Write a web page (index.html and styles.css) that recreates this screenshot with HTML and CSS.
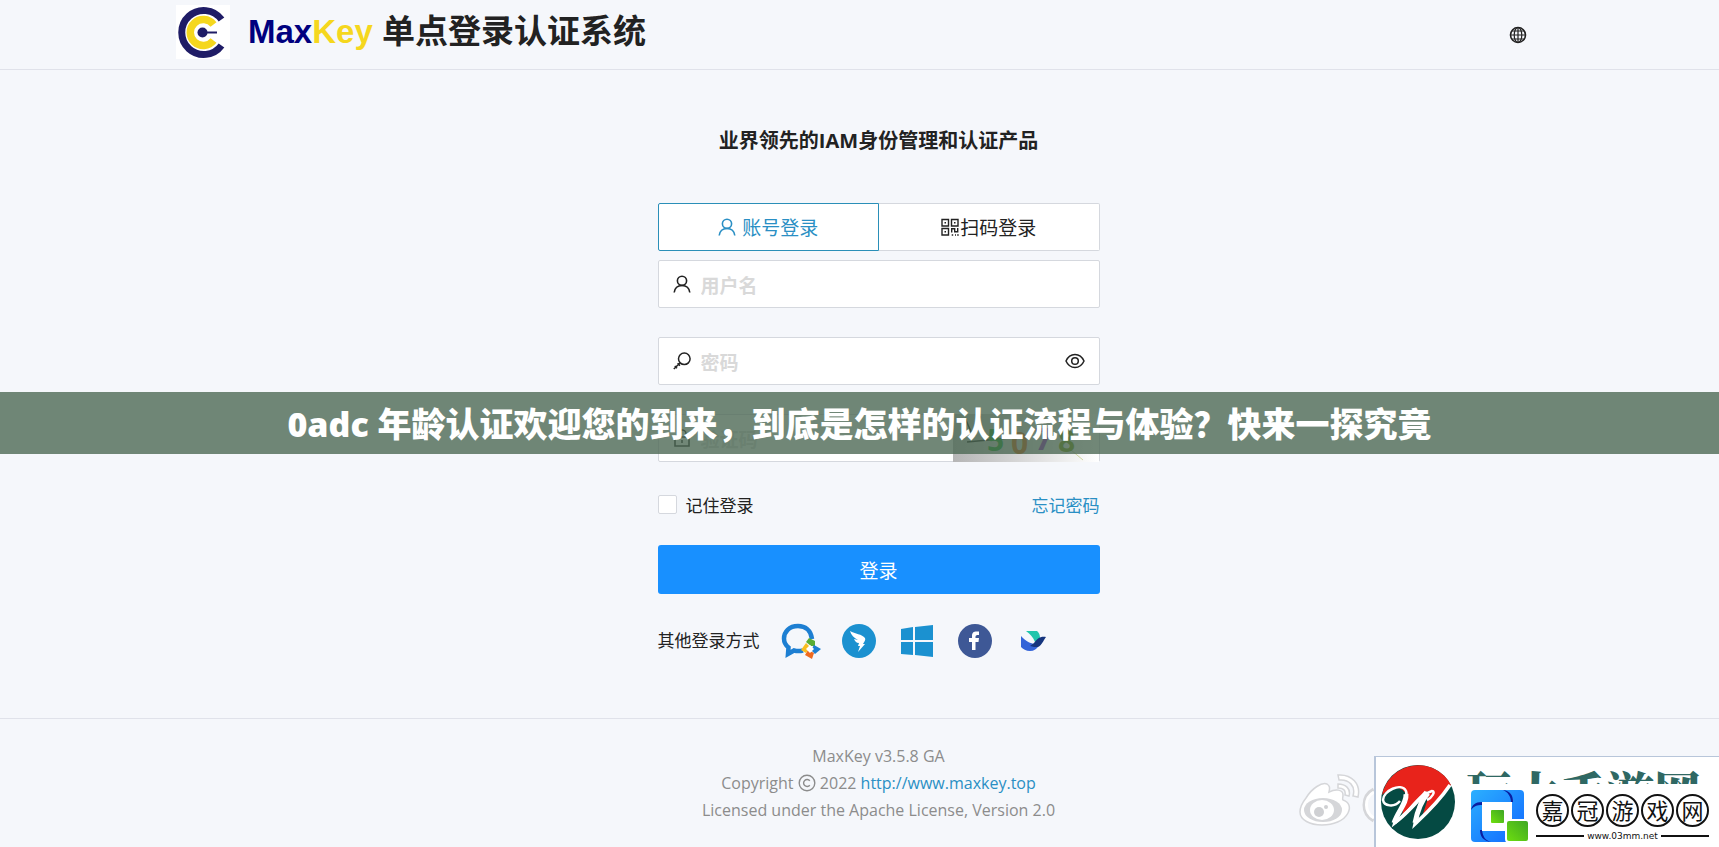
FILE: index.html
```html
<!DOCTYPE html>
<html lang="zh-CN">
<head>
    <meta charset="UTF-8">
    <meta name="viewport" content="width=device-width, initial-scale=1.0">
    <title>MaxKey 单点登录认证系统</title>
    <link rel="stylesheet" href="styles.css">
</head>
<body>
    <header class="header">
        <div class="brand">
            <svg class="logo" viewBox="0 0 54 54">
                <rect width="54" height="54" fill="#fff"/>
                <path d="M45.500 14.500A22 22 0 1 0 45.500 40.500" fill="none" stroke="#1f1c66" stroke-width="7"/>
                <path d="M37.500 19.500A13 13 0 1 0 37.500 35.500" fill="none" stroke="#f5d71e" stroke-width="7.500"/>
                <circle cx="26.500" cy="27.500" r="5" fill="#1f1c66"/>
                <path d="M26 27.500H41" stroke="#1f1c66" stroke-width="2"/>
            </svg>
            <h1 class="title"><span class="max">Max</span><span class="key">Key</span> 单点登录认证系统</h1>
        </div>
        <button class="lang" type="button" aria-label="语言">
            <svg viewBox="0 0 18 18" fill="none" stroke="#222" stroke-width="1.200">
                <circle cx="9" cy="9" r="7.500" stroke-width="1.600"/>
                <ellipse cx="9" cy="9" rx="3.800" ry="7.500"/>
                <path d="M9 1.500v15M1.500 9h15M2.800 5h12.400M2.800 13h12.400"/>
            </svg>
        </button>
    </header>

    <main class="main">
        <h2 class="slogan">业界领先的IAM身份管理和认证产品</h2>
        <form class="login">
            <div class="tabs">
                <button class="tab active" type="button">
                    <svg class="icon" viewBox="0 0 18 18" fill="none" stroke="currentColor" stroke-width="1.600">
                        <circle cx="9" cy="5.800" r="4.600"/>
                        <path d="M1.200 17.500C1.800 13 5 10.500 9 10.500s7.200 2.500 7.800 7"/>
                    </svg>
                    <span>账号登录</span>
                </button>
                <button class="tab qr" type="button">
                    <svg class="icon" viewBox="0 0 18 18" fill="none" stroke="currentColor" stroke-width="1.400">
                        <path d="M1 1.500h6.500v6.500H1zM10.500 1.500H17v6.500h-6.500zM1 10.500h6.500V17H1z"/>
                        <path d="M3.500 4.700h1.500M13 4.700h1.500M3.500 13.700h1.500M10.700 10v4.500M10.700 10.700h3v3h3V10M10.700 17h1.500M14 17h1M16.200 17h1.500"/>
                    </svg>
                    <span>扫码登录</span>
                </button>
            </div>

            <div class="field">
                <svg class="icon" viewBox="0 0 18 18" fill="none" stroke="currentColor" stroke-width="1.600">
                    <circle cx="9" cy="5.800" r="4.600"/>
                    <path d="M1.200 17.500C1.800 13 5 10.500 9 10.500s7.200 2.500 7.800 7"/>
                </svg>
                <input type="text" placeholder="用户名" aria-label="用户名">
            </div>

            <div class="field">
                <svg class="icon" viewBox="0 0 18 18" fill="none" stroke="currentColor" stroke-width="1.500">
                    <circle cx="11.300" cy="6.800" r="5.800"/>
                    <path d="M7 11L.8 17M4.600 11.200l2.400 2.400M1.800 14l2.200 2.200"/>
                </svg>
                <input type="password" placeholder="密码" aria-label="密码">
                <svg class="eye" viewBox="0 0 20 16" fill="none" stroke="currentColor" stroke-width="1.500">
                    <path d="M1 8C3 3.500 6 1.500 10 1.500S17 3.500 19 8c-2 4.500-5 6.500-9 6.500S3 12.500 1 8z"/>
                    <circle cx="10" cy="8" r="3.300"/>
                </svg>
            </div>

            <div class="field captcha">
                <svg class="icon" viewBox="0 0 18 18" fill="none" stroke="currentColor" stroke-width="1.600">
                    <path d="M2 8h14v9H2zM5 8V4.500a4 3.500 0 0 1 8 0V8M9 11v3"/>
                </svg>
                <input type="text" placeholder="验证码" aria-label="验证码">
                <svg class="code" viewBox="0 0 146 48" role="img" aria-label="验证码图片">
                    <defs>
                        <linearGradient id="shade">
                            <stop offset="0" stop-color="#b5b5b5"/>
                            <stop offset="1" stop-color="#fff"/>
                        </linearGradient>
                    </defs>
                    <rect width="146" height="48" fill="url(#shade)"/>
                    <path d="M14 28L56 24M12 4l8 18" stroke="#111" stroke-width="1.500"/>
                    <path d="M118 36l12 10" stroke="#cfd6a0"/>
                    <g class="digits">
                        <text x="34" y="37" fill="#0a9a1a">5</text>
                        <text x="58" y="40" fill="#d85a00">0</text>
                        <text x="82" y="36" fill="#9020c0">7</text>
                        <text x="105" y="38" fill="#6f9800">8</text>
                    </g>
                </svg>
            </div>

            <div class="options">
                <label class="remember"><input type="checkbox"> 记住登录</label>
                <a href="#">忘记密码</a>
            </div>

            <button class="submit" type="submit">登录</button>

            <div class="social">
                <span>其他登录方式</span>
                <a href="#" aria-label="企业微信">
                    <svg viewBox="2 0 37 36">
                        <path d="M32 16C31 7 25 3 18 3C9 3 4 9 4 15.500c0 4 2 7 4.500 9L8 31l6-3.500c3 .8 6 .8 9 0" fill="none" stroke="#1d7fd2" stroke-width="4.500"/>
                        <path d="M29 15l6 3v5h-4l-5-4z" fill="#5aad35"/>
                        <path d="M41 26l-6 5-4-4 3-5z" fill="#1d7fd2"/>
                        <path d="M32 36l-7-4 3-5 6 3z" fill="#ee6a20"/>
                        <path d="M21 27l5-7 4 4-4 6z" fill="#f9bd20"/>
                        <path d="M30 22l4 4-4 4-4-4z" fill="#fff"/>
                    </svg>
                </a>
                <a href="#" aria-label="钉钉">
                    <svg viewBox="0 0 36 36">
                        <circle cx="18" cy="18" r="17" fill="#1b91d0"/>
                        <path d="M9 8c5 3 12 3 15 7 1 2-1 4-2 6h2l-7 8 2-6h-2l1-3c-3 0-4-2-5-4l4 1c-4-2-7-5-8-9z" fill="#fff"/>
                    </svg>
                </a>
                <a href="#" aria-label="Windows">
                    <svg viewBox="0 0 36 36">
                        <path d="M2 6l12-2v13H2zM16 4l18-2v15H16zM2 19h12v13L2 31zM16 19h18v15l-18-2z" fill="#1b91d0"/>
                    </svg>
                </a>
                <a href="#" aria-label="Facebook">
                    <svg viewBox="0 0 36 36">
                        <circle cx="18" cy="18" r="17" fill="#3e5896"/>
                        <path d="M15 27V19h-3v-4h3v-2c0-4 2-5 7-4.500V12c-3 0-3.500 0-3.500 3h3.500l-.5 4h-3v8z" fill="#fff"/>
                    </svg>
                </a>
                <a href="#" aria-label="飞书">
                    <svg viewBox="0 0 36 36">
                        <path d="M11 8h11c3 3 3 5 3 8l-5 3c-2-5-5-8-9-11z" fill="#22c5ac"/>
                        <path d="M6 13c5 6 11 8 18 9-2 4-5 6-9 6-4 0-7-2-9-4z" fill="#3464d8"/>
                        <path d="M19 20c3-4 6-7 12-6-3 4-4 8-8 10-3 0-5 0-8-1z" fill="#15357e"/>
                    </svg>
                </a>
            </div>
        </form>
    </main>

    <footer class="footer">
        <p>MaxKey v3.5.8 GA</p>
        <p>Copyright
            <svg class="copy" viewBox="0 0 18 18" fill="none" stroke="currentColor" stroke-width="1.400">
                <circle cx="9" cy="9" r="7.800"/>
                <path d="M11.800 6.800a3.500 3.500 0 1 0 0 4.400"/>
            </svg>
            2022 <a href="#">http://www.maxkey.top</a></p>
        <p>Licensed under the Apache License, Version 2.0</p>
    </footer>

    <div class="banner">0adc 年龄认证欢迎您的到来，到底是怎样的认证流程与体验？快来一探究竟</div>

    <div class="watermark">
        <svg class="weibo" viewBox="0 0 76 56">
            <g fill="#fff" stroke="#d5d6d9" stroke-width="1.500">
                <path d="M8 24C14 14 24 8 29 10c3 2 3 4 2 8 6-3 14-3 14 3 0 3-1 4 0 5 6 2 8 7 5 13-4 8-15 12-26 12C12 51 2 46 2 38c0-5 2-9 6-14z"/>
                <path d="M40 1c14-1 23 9 20 22l-5-1c3-10-4-17-14-16zM40 10c8 0 13 5 11 12l-4-1c1-5-2-7-7-7z"/>
            </g>
            <ellipse cx="25" cy="36" rx="19" ry="12" fill="#d5d6d9"/>
            <ellipse cx="24" cy="36" rx="12" ry="10" fill="#fff"/>
            <circle cx="21" cy="38" r="5" fill="#cfd0d3"/>
            <circle cx="28" cy="33" r="2" fill="#cfd0d3"/>
            <path d="M76 16a17 17 0 0 0 0 30" fill="none" stroke="#d5d6d9" stroke-width="5"/>
            <path d="M76 18a15 15 0 0 0 0 26" fill="none" stroke="#fff" stroke-width="3"/>
        </svg>
        <div class="sites">
            <svg class="red-logo" viewBox="0 0 76 76">
                <circle cx="38" cy="38" r="37" fill="#054a43"/>
                <path d="M2 31A37 37 0 0 1 71 21C62 34 54 46 42 53L50 28C46 24 40 36 22 52L26 30C20 20 10 24 2 31z" fill="#e8231b"/>
                <path d="M20 37C14 44 4 42 3 36C3 27 21 18 26 27c3 8-8 20-12 33C32 46 36 32 52 27c4 0 0 7-5 9" fill="none" stroke="#fff" stroke-width="2.500"/>
                <path d="M14 59c10-6 22-20 32-31-6 10-9 22-11 32C50 46 60 36 70 21" fill="none" stroke="#fff" stroke-width="3.500"/>
                <path d="M26 30c1 9-8 17-12 29M48 29c-8 9-11 20-13 30" fill="none" stroke="#fff" stroke-width="5"/>
            </svg>
            <div class="names">
                <div class="cut">玩大手游网</div>
                <div class="jiaguan">
                    <svg class="blue-logo" viewBox="0 0 60 54">
                        <defs>
                            <linearGradient id="blue" x1="0" y1="0" x2="1" y2="1">
                                <stop offset="0" stop-color="#2bb0ff"/>
                                <stop offset="1" stop-color="#1267ff"/>
                            </linearGradient>
                            <linearGradient id="green" x1="0" y1="1" x2="1" y2="0">
                                <stop offset="0" stop-color="#6fe00e"/>
                                <stop offset="1" stop-color="#3da524"/>
                            </linearGradient>
                        </defs>
                        <rect x="1" y="1" width="53" height="52" rx="4" fill="url(#blue)"/>
                        <path d="M33 1c8 1 10 6 10 12h-2c0-5-3-10-8-12zM12 13C5 13 2 16 1 21c3-4 6-5 11-5zM12 41c1 7 3 10 9 12-8-1-11-6-11-12z" fill="#0a1ea0"/>
                        <rect x="12" y="13" width="30" height="29" fill="#fff"/>
                        <rect x="21" y="21" width="13" height="13" rx="1" fill="url(#green)"/>
                        <rect x="36" y="31" width="23" height="22" rx="3" fill="url(#green)" stroke="#fff" stroke-width="2"/>
                    </svg>
                    <div class="jiaguan-text">
                        <div class="rings"><span>嘉</span><span>冠</span><span>游</span><span>戏</span><span>网</span></div>
                        <div class="url">www.03mm.net</div>
                    </div>
                </div>
            </div>
        </div>
    </div>
</body>
</html>
```
FILE: styles.css
```css
* {
    box-sizing: border-box;
}

body {
    position: relative;
    display: flex;
    flex-direction: column;
    min-height: 100vh;
    margin: 0;
    overflow: hidden;
    background-color: #f5f7fb;
    color: #222;
    font-family: "Open Sans", "Noto Sans CJK SC", sans-serif;
    font-size: 17px;
}

a {
    color: #2a8fc4;
    text-decoration: none;
}

button, input {
    font: inherit;
    color: inherit;
}

.header {
    display: flex;
    justify-content: space-between;
    align-items: center;
    height: 70px;
    padding: 0 192px 0 176px;
    border-bottom: 1px solid #e0e2ea;
}

.brand {
    display: flex;
    align-items: center;
    gap: 18px;
    padding-bottom: 6px;
}

.logo {
    width: 54px;
    height: 54px;
}

.title {
    margin: 0;
    font-family: "Liberation Sans", "Noto Sans CJK SC", sans-serif;
    font-size: 33px;
    line-height: 48px;
}

.max {
    color: #00007f;
}

.key {
    color: #f5d71e;
}

.lang {
    width: 18px;
    height: 18px;
    padding: 0;
    border: none;
    background: none;
}

.lang svg {
    display: block;
}

.main {
    padding-left: 38px;
}

.slogan {
    margin: 55px 0 46px;
    font-size: 20px;
    line-height: 32px;
    text-align: center;
}

.login {
    width: 442px;
    margin: 0 auto;
}

.tabs {
    display: flex;
    margin-bottom: 9px;
}

.tab {
    display: flex;
    flex: 1;
    justify-content: center;
    align-items: center;
    gap: 6px;
    height: 48px;
    border: 1px solid #d5d8de;
    border-left: none;
    border-radius: 0 2px 2px 0;
    background: #fff;
    font-size: 19px;
}

.tab.active {
    border: 1px solid #2a8fb8;
    border-radius: 2px 0 0 2px;
    color: #2a8fc4;
}

.tab.qr {
    gap: 1px;
}

.icon {
    flex: none;
    width: 18px;
    height: 18px;
}

.field {
    display: flex;
    align-items: center;
    gap: 10px;
    height: 48px;
    margin-bottom: 29px;
    padding: 0 14px;
    border: 1px solid #d5d8de;
    border-radius: 2px;
    background: #fff;
}

.field input {
    flex: 1;
    min-width: 0;
    padding: 3px 0 0;
    border: none;
    outline: none;
    background: none;
    font-size: 19px;
}

.field input::placeholder {
    color: #d9d9d9;
    font-weight: bold;
}

.eye {
    width: 20px;
    height: 16px;
}

.captcha {
    padding-right: 0;
}

.code {
    width: 146px;
    height: 48px;
}

.digits {
    font-size: 30px;
    font-weight: bold;
}

.options {
    display: flex;
    justify-content: space-between;
    align-items: center;
    height: 26px;
    margin-bottom: 28px;
}

.remember {
    display: flex;
    align-items: center;
    gap: 9px;
}

.remember input {
    width: 19px;
    height: 19px;
    margin: 0;
    appearance: none;
    border: 1px solid #d5d8de;
    border-radius: 2px;
    background: #fff;
}

.submit {
    width: 100%;
    height: 49px;
    border: none;
    border-radius: 3px;
    background: #1890ff;
    color: #fff;
    font-size: 19px;
}

.social {
    display: flex;
    align-items: center;
    gap: 22px;
    height: 36px;
    margin: 29px 0 59px;
}

.social span {
    padding-bottom: 4px;
}

.social svg {
    display: block;
    height: 36px;
    overflow: visible;
}

.footer {
    padding: 24px 0 23px 38px;
    border-top: 1px solid #e0e2ea;
    color: #8c8c8c;
    font-size: 16px;
    line-height: 27px;
    text-align: center;
}

.footer p {
    margin: 0;
}

.copy {
    width: 18px;
    height: 18px;
    vertical-align: -3px;
}

/* strip over the form */
.banner {
    position: absolute;
    top: 392px;
    left: 0;
    right: 0;
    height: 62px;
    background: rgba(77, 105, 85, 0.8);
    color: #fff;
    font-size: 34px;
    font-weight: 900;
    line-height: 64px;
    text-align: center;
    white-space: nowrap;
}

/* bottom right corner */
.watermark {
    position: absolute;
    right: 0;
    bottom: 0;
    display: flex;
    align-items: center;
}

.weibo {
    width: 76px;
    height: 56px;
}

.sites {
    display: flex;
    gap: 14px;
    width: 345px;
    height: 91px;
    padding: 7px 0 0 4px;
    border-top: 1px solid #b8c6da;
    border-left: 2px solid #b8c6da;
    background: #fff;
}

.red-logo {
    width: 76px;
    height: 76px;
}

.cut {
    height: 20px;
    margin-left: -4px;
    overflow: hidden;
    color: #2f6863;
    font-family: "Noto Serif CJK SC", "Noto Sans CJK SC", serif;
    font-size: 47px;
    font-weight: 900;
    line-height: 54px;
}

.jiaguan {
    display: flex;
    gap: 6px;
    padding-top: 5px;
}

.blue-logo {
    width: 60px;
    height: 54px;
}

.rings {
    display: flex;
    gap: 2px;
    padding-top: 5px;
}

.rings span {
    width: 33px;
    height: 33px;
    border: 2px solid #111;
    border-radius: 50%;
    color: #111;
    font-size: 22px;
    line-height: 28px;
    text-align: center;
}

.url {
    display: flex;
    align-items: center;
    gap: 3px;
    color: #111;
    font-family: "DejaVu Sans", sans-serif;
    font-size: 9px;
    line-height: 18px;
}

.url::before, .url::after {
    content: "";
    flex: 1;
    height: 2px;
    background: #111;
}
```
